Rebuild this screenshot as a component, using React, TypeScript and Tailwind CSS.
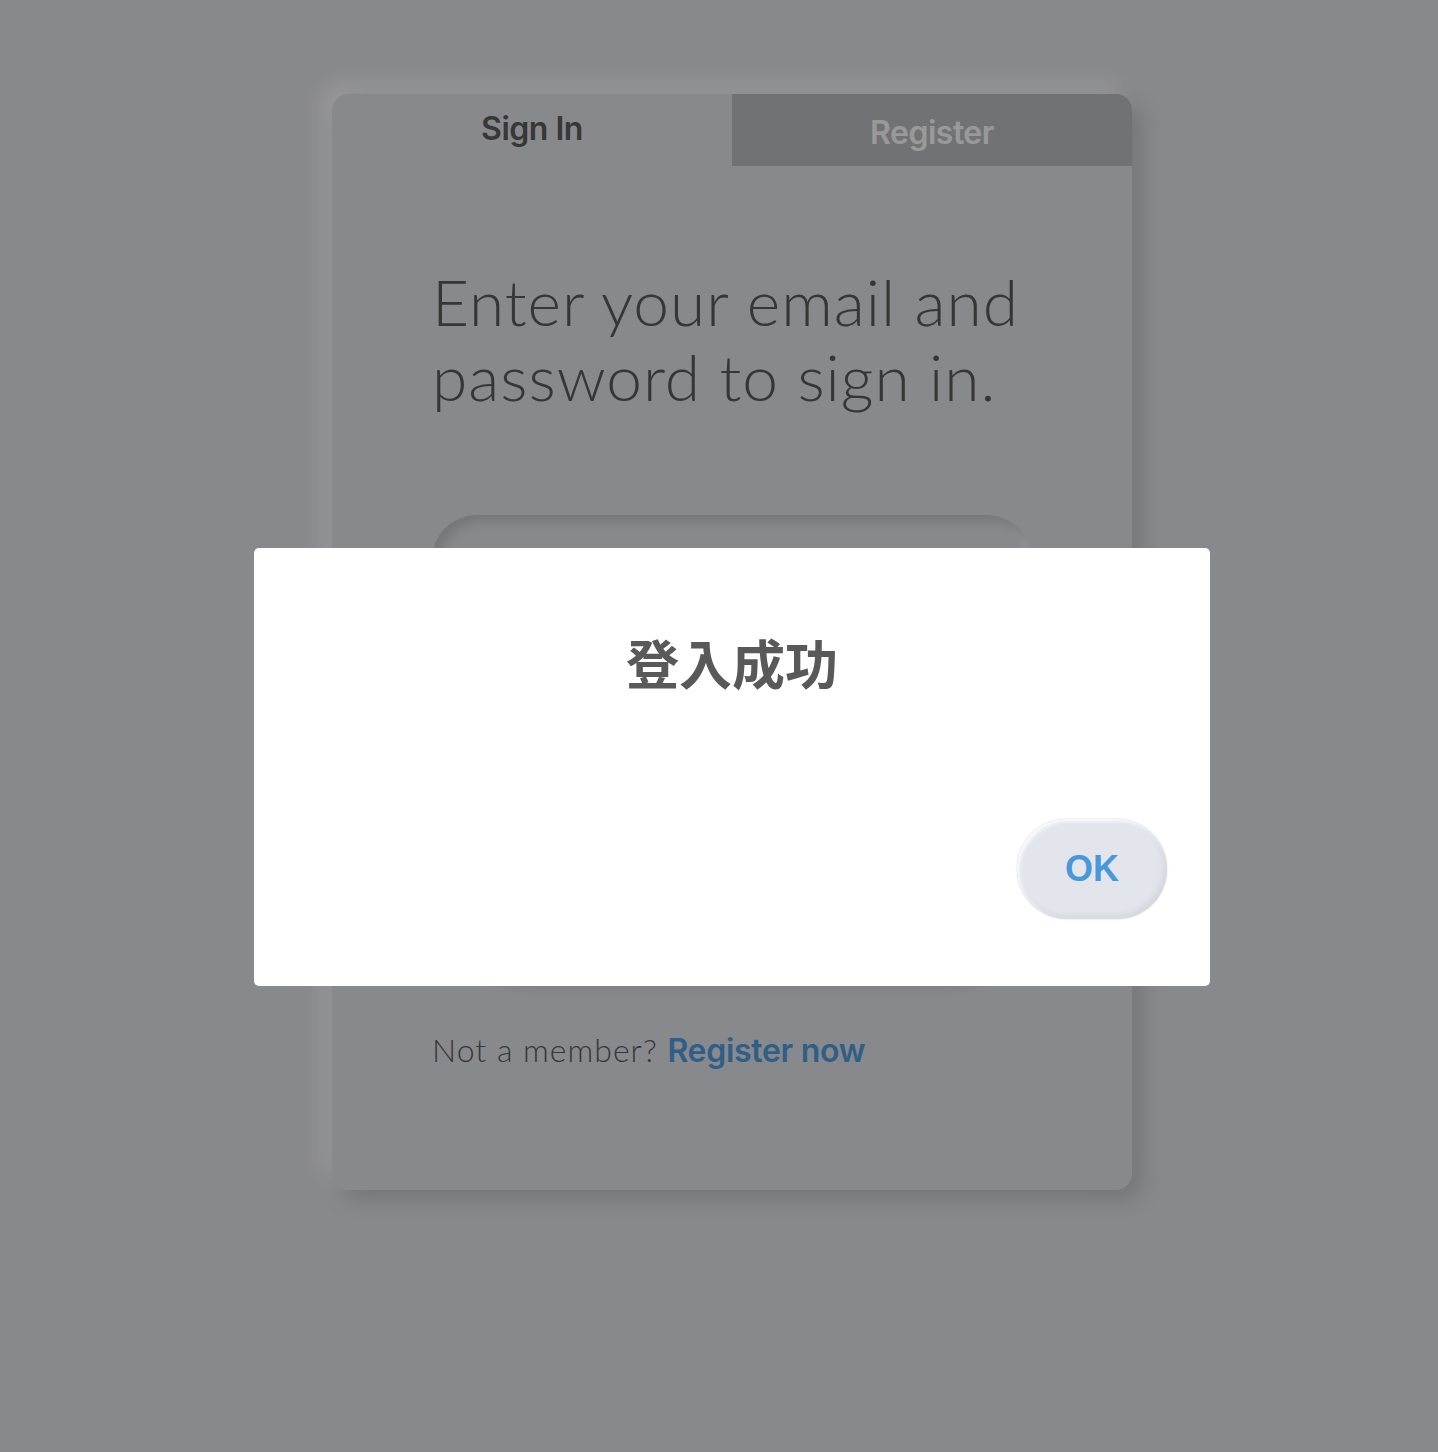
import React from "react";

const raleway = { fontFamily: "Lato, 'Noto Sans', sans-serif" };

export default function App() {
  return (
    <div className="relative min-h-[1452px] w-full bg-[#e3e4eb]" style={raleway}>
      <div className="flex justify-center pl-[26px] pt-[94px]">
        <div className="w-[800px] rounded-2xl bg-[#e3e4eb] shadow-[10px_10px_22px_#c3c4cb,-10px_-10px_22px_#ffffff]">
          <div className="flex h-[72px]">
            <div className="flex flex-1 items-center justify-center pb-[2px] font-['Inter',sans-serif] text-[32px] font-semibold tracking-[-0.5px] text-[#5c5c5e]">
              Sign In
            </div>
            <div className="flex flex-1 items-center justify-center rounded-tr-2xl bg-[#bcbec5] pt-[6px] font-['Inter',sans-serif] text-[32px] font-semibold tracking-[-0.5px] text-white">
              Register
            </div>
          </div>

          <div className="px-[100px] pb-[115px] pt-[98px]">
            <h1 className="text-[64px] font-light leading-[75px] tracking-[1px] text-[#5a5a5c]">
              Enter your email and password to sign in.
            </h1>

            <div className="mt-[101px] h-[90px] rounded-[45px] bg-[#e3e4eb] shadow-[inset_6px_6px_12px_#c3c4cb,inset_-6px_-6px_12px_#ffffff]" />
            <div className="mt-[40px] h-[90px] rounded-[45px] bg-[#e3e4eb] shadow-[inset_6px_6px_12px_#c3c4cb,inset_-6px_-6px_12px_#ffffff]" />
            <div className="mx-[40px] mt-[150px] h-[90px] rounded-[45px] bg-[#e3e4eb] shadow-[8px_8px_16px_#c3c4cb,-8px_-8px_16px_#ffffff]" />

            <p className="mt-[51px] text-[32px] font-light tracking-[1px] text-[#5c5c5e]">
              Not a member? <span className="font-['Inter',sans-serif] font-semibold tracking-[-0.3px] text-[#4f9fe0]">Register now</span>
            </p>
          </div>
        </div>
      </div>

      <div className="fixed inset-0 flex items-start justify-center bg-black/40 pl-[26px] pt-[548px]">
        <div className="flex h-[438px] w-[956px] flex-col rounded-[5px] bg-white">
          <h2 className="pt-[82px] text-center font-['Noto_Sans_CJK_TC','Noto_Sans_CJK_SC',sans-serif] text-[53px] font-bold leading-[64px] text-[#595959]">
            登入成功
          </h2>
          <div className="mt-auto flex justify-end pb-[67px] pr-[43px]">
            <button className="h-[100px] w-[150px] rounded-full bg-[#e3e5ec] font-['Liberation_Sans',Arial,sans-serif] text-[36px] font-bold text-[#4a98d8] shadow-[inset_2px_2px_4px_#ffffff,inset_-3px_-3px_6px_#d2d4dc,0_0_2px_#cfd1d8]">
              OK
            </button>
          </div>
        </div>
      </div>
    </div>
  );
}
